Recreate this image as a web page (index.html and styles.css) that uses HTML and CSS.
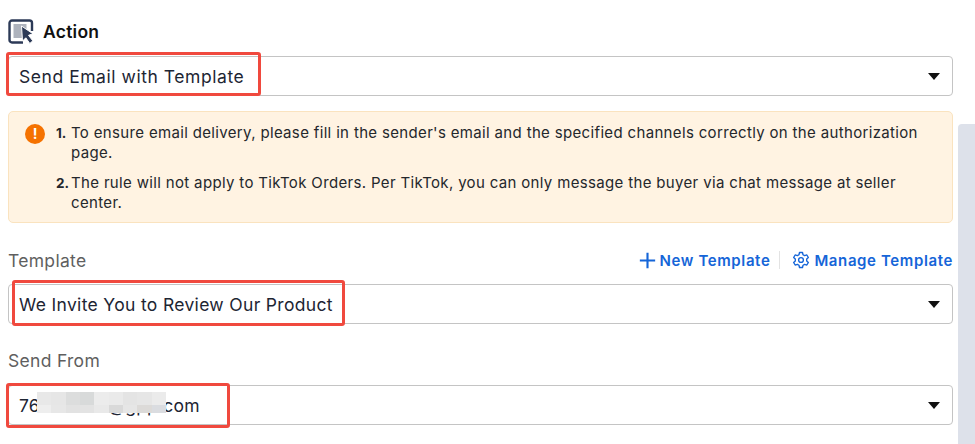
FILE: index.html
```html
<!DOCTYPE html>
<html lang="en">
<head>
<meta charset="utf-8">
<title>Action</title>
<link rel="stylesheet" href="styles.css">
</head>
<body>
<main class="page">
  <h2 class="heading">
    <svg class="action-icon" viewBox="0 0 26 25" width="26" height="25" aria-hidden="true">
      <path d="M24 12V4a2.500 2.500 0 0 0-2.500-2.500H4A2.500 2.500 0 0 0 1.500 4v17A2.500 2.500 0 0 0 4 23.500h11" fill="none" stroke="#2c3a57" stroke-width="2.400"/>
      <rect x="5.500" y="5" width="13" height="14" fill="#aeb3bd"/>
      <path d="M13.500 7L25 14.800l-4.500 1.500 4.300 5.500-3 2.700-4-5.700-3.300 3.300z" fill="#2c3a57" stroke="#fff" stroke-width="1"/>
    </svg>
    <span>Action</span>
  </h2>
  <div class="select">
    <span class="value-short">Send Email with Template</span>
    <i class="caret"></i>
  </div>
  <div class="notice">
    <span class="notice-icon">!</span>
    <ol class="notice-list">
      <li>To ensure email delivery, please fill in the sender's email and the specified channels correctly on the authorization page.</li>
      <li>The rule will not apply to TikTok Orders. Per TikTok, you can only message the buyer via chat message at seller center.</li>
    </ol>
  </div>
  <div class="label-row">
    <label class="label">Template</label>
    <div class="links">
      <a class="link">
        <svg viewBox="0 0 16 16" width="17" height="17" aria-hidden="true"><path d="M8 .8v14.400M.8 8h14.400" stroke="#1565d8" stroke-width="2" fill="none"/></svg>
        New Template
      </a>
      <i class="link-divider"></i>
      <a class="link">
        <svg viewBox="0 0 24 24" width="18" height="18" fill="none" stroke="#1565d8" stroke-width="1.800" stroke-linejoin="round" aria-hidden="true"><circle cx="12" cy="12" r="3.200"/><path d="M10 2h4l.7 3 2.100 1.200 3-.9 2 3.400-2.200 2.100v2.400l2.200 2.100-2 3.400-3-.9-2.100 1.200-.7 3h-4l-.7-3-2.100-1.200-3 .9-2-3.400 2.200-2.100v-2.400L2.200 8.700l2-3.400 3 .9L9.300 5z"/></svg>
        Manage Template
      </a>
    </div>
  </div>
  <div class="select">
    <span>We Invite You to Review Our Product</span>
    <i class="caret"></i>
  </div>
  <label class="label label-from">Send From</label>
  <div class="select">
    <span class="value-email">76xxxxxxx@gpp.com</span>
    <i class="caret"></i>
  </div>
</main>
<div class="mosaic" aria-hidden="true">
  <i class="m1"></i><i class="m2"></i><i class="m3"></i><i class="m4"></i><i class="m5"></i><i class="m6"></i><i class="m7"></i><i class="m8"></i><i class="m9"></i>
  <i class="m10"></i><i class="m11"></i><i class="m12"></i><i class="m13"></i><i class="m14"></i><i class="m15"></i><i class="m16"></i><i class="m17"></i><i class="m18"></i>
</div>
<div class="mark mark-1"></div>
<div class="mark mark-2"></div>
<div class="mark mark-3"></div>
<div class="scrollbar"></div>
</body>
</html>
```
FILE: styles.css
```css
* { box-sizing: border-box; }
html, body { margin: 0; height: 444px; overflow: hidden; }
body { background: #fff; font-family: Inter, "Open Sans", Arial, sans-serif; color: #1f2329; position: relative; }
.page { width: 953px; padding: 19px 0 0 8px; }
.heading { display: flex; align-items: center; gap: 9px; height: 25px; margin: 0 0 12px; font-size: 17.500px; letter-spacing: .25px; font-weight: 600; color: #111; }
.action-icon { flex: none; }
.select { display: flex; align-items: center; justify-content: space-between; height: 40px; padding: 0 12px 0 10px; border: 1px solid #c4c4c4; border-radius: 4px; font-size: 17.500px; letter-spacing: .33px; color: #1d2533; }
.value-short { letter-spacing: .55px; }
.value-email { letter-spacing: .2px; }
.caret { width: 0; height: 0; border-left: 6px solid transparent; border-right: 6px solid transparent; border-top: 7px solid #111; }
.notice { display: flex; gap: 11px; height: 112px; margin-top: 15px; padding: 11px 14px 0 16px; background: #fff3e2; border: 1px solid #fae3bf; border-radius: 5px; }
.notice-icon { flex: none; width: 20px; height: 20px; margin-top: 1px; border-radius: 50%; background: #f57200; color: #fff; font-size: 14px; font-weight: 700; line-height: 20px; text-align: center; }
.notice-list { margin: 0; padding: 0; list-style: none; counter-reset: note; font-size: 15px; letter-spacing: .34px; line-height: 20px; color: #24272c; }
.notice-list li { margin-bottom: 10px; padding-left: 15px; counter-increment: note; }
.notice-list li::before { content: counter(note) "."; display: inline-block; width: 15px; margin-left: -15px; font-size: 13.500px; font-weight: 700; letter-spacing: 0; }
.label-row { display: flex; align-items: center; justify-content: space-between; height: 26px; margin-top: 24px; margin-bottom: 11px; }
.label { font-size: 17.500px; letter-spacing: .3px; color: #5f5f5f; }
.label-from { display: block; height: 24px; margin-top: 25px; margin-bottom: 12px; line-height: 24px; }
.links { display: flex; align-items: center; }
.link { display: flex; align-items: center; gap: 4px; font-size: 15px; letter-spacing: .62px; font-weight: 600; color: #1565d8; }
.link-divider { width: 1px; height: 18px; margin: 0 12px 0 9px; background: #e3e3e3; }
.mark { position: absolute; border: 3px solid #f0493e; border-radius: 3px; }
.mark-1 { left: 6px; top: 52px; width: 255px; height: 44px; }
.mark-2 { left: 12px; top: 280px; width: 333px; height: 46px; }
.mark-3 { left: 6px; top: 383px; width: 224px; height: 45px; }
.scrollbar { position: absolute; left: 958px; top: 124px; width: 17px; height: 320px; background: #dde1ea; border-radius: 4px 0 0 0; }
.mosaic { position: absolute; left: 37px; top: 392px; width: 129px; height: 21px; display: grid; grid-template-columns: repeat(9, 1fr); grid-template-rows: 13px 8px; }
.m1 { background: #e8e8e8; } .m2 { background: #e6e6e6; } .m3 { background: #dcdddd; } .m4 { background: #d8dada; } .m5 { background: #ececec; }
.m6 { background: #eaeaea; } .m7 { background: #e4e4e4; } .m8 { background: #e6e6e6; } .m9 { background: #ebebeb; }
.m10 { background: #eeeeee; } .m11 { background: #e7e7e7; } .m12 { background: #e2e2e2; } .m13 { background: #e3e3e3; } .m14 { background: #e9e9e9; }
.m15 { background: #d9d9d9; } .m16 { background: #e6e6e6; } .m17 { background: #dcdad8; } .m18 { background: #dadce0; }
```
